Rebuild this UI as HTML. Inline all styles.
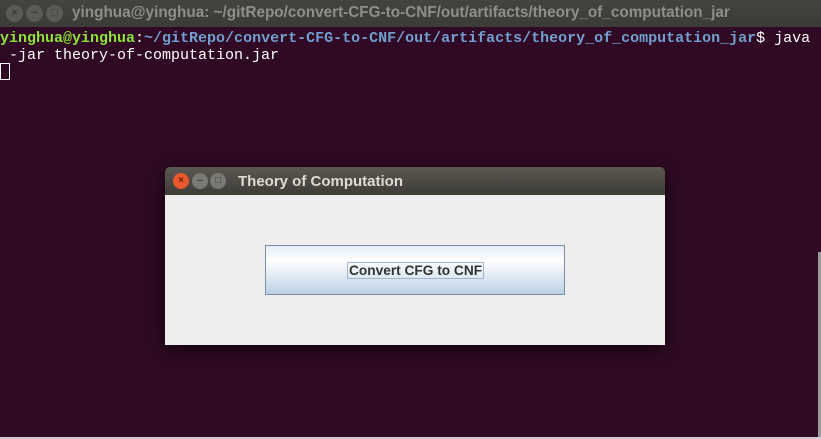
<!DOCTYPE html>
<html><head><meta charset="utf-8"><style>
html,body{margin:0;padding:0}
body{width:821px;height:439px;overflow:hidden;background:#300a24;position:relative;font-family:"Liberation Sans",sans-serif}
.tb{position:absolute;left:0;top:0;width:821px;height:27px;background:linear-gradient(#44443f,#3b3b37);}
.tb .t{position:absolute;left:72px;top:4px;color:#8f8e88;font-weight:bold;font-size:15.3px}
.c{position:absolute;top:5px;width:17px;height:17px;border-radius:50%;background:#5b5b56;color:#3c3c38;font-size:11px;line-height:17px;text-align:center;font-weight:bold}
.term{position:absolute;left:0;top:30px;font-family:"Liberation Mono",monospace;font-size:15px;line-height:17px;color:#fff;white-space:pre}
.g{color:#8ae234;font-weight:bold}.b{color:#729fcf;font-weight:bold}
.cur{position:absolute;left:0;top:63px;width:8px;height:15px;border:1px solid #fff}
.dlg{position:absolute;left:165px;top:167px;width:500px;height:178px;box-shadow:0 4px 18px rgba(0,0,0,.7);border-radius:5px 5px 0 0;overflow:hidden}
.dt{height:28px;background:linear-gradient(#5a5850,#3d3c37);position:relative}
.dt .t{position:absolute;left:73px;top:6px;color:#dfdbd2;font-weight:bold;font-size:15px}
.db{height:150px;background:#eeeeee;position:relative}
.btn{position:absolute;left:100px;top:50px;width:298px;height:48px;border:1px solid #7a8ea6;background:linear-gradient(#e3edf7 0%,#ffffff 30%,#d9e5f1 70%,#bdd0e6 100%)}
.btn span{position:absolute;left:81px;top:16px;border:1px solid #a0b4cc;padding:0 1px;font-weight:bold;font-size:13.7px;color:#333;line-height:15px}
.sb{position:absolute;left:818px;top:252px;width:3px;height:187px;background:#9a9a9a}
.bot{position:absolute;left:0;top:437px;width:821px;height:2px;background:#cfcfcf}
</style></head><body>
<div class="tb">
<div class="c" style="left:6px">×</div><div class="c" style="left:26px">−</div><div class="c" style="left:46px">□</div>
<div class="t">yinghua@yinghua: ~/gitRepo/convert-CFG-to-CNF/out/artifacts/theory_of_computation_jar</div>
</div>
<div class="term"><span class="g">yinghua@yinghua</span>:<span class="b">~/gitRepo/convert-CFG-to-CNF/out/artifacts/theory_of_computation_jar</span>$ java
 -jar theory-of-computation.jar</div>
<div class="cur"></div>
<div class="dlg">
<div class="dt">
<div class="c" style="left:8px;top:6px;background:#e9592c;color:#6b1e08;width:16px;height:16px;line-height:16px;font-size:10px">×</div>
<div class="c" style="left:27px;top:6px;background:#7a7974;width:16px;height:16px;line-height:16px">−</div>
<div class="c" style="left:45px;top:6px;background:#7a7974;width:16px;height:16px;line-height:16px;font-size:10px">□</div>
<div class="t">Theory of Computation</div>
</div>
<div class="db"><div class="btn"><span>Convert CFG to CNF</span></div></div>
</div>
<div class="sb"></div>
<div class="bot"></div>
</body></html>
